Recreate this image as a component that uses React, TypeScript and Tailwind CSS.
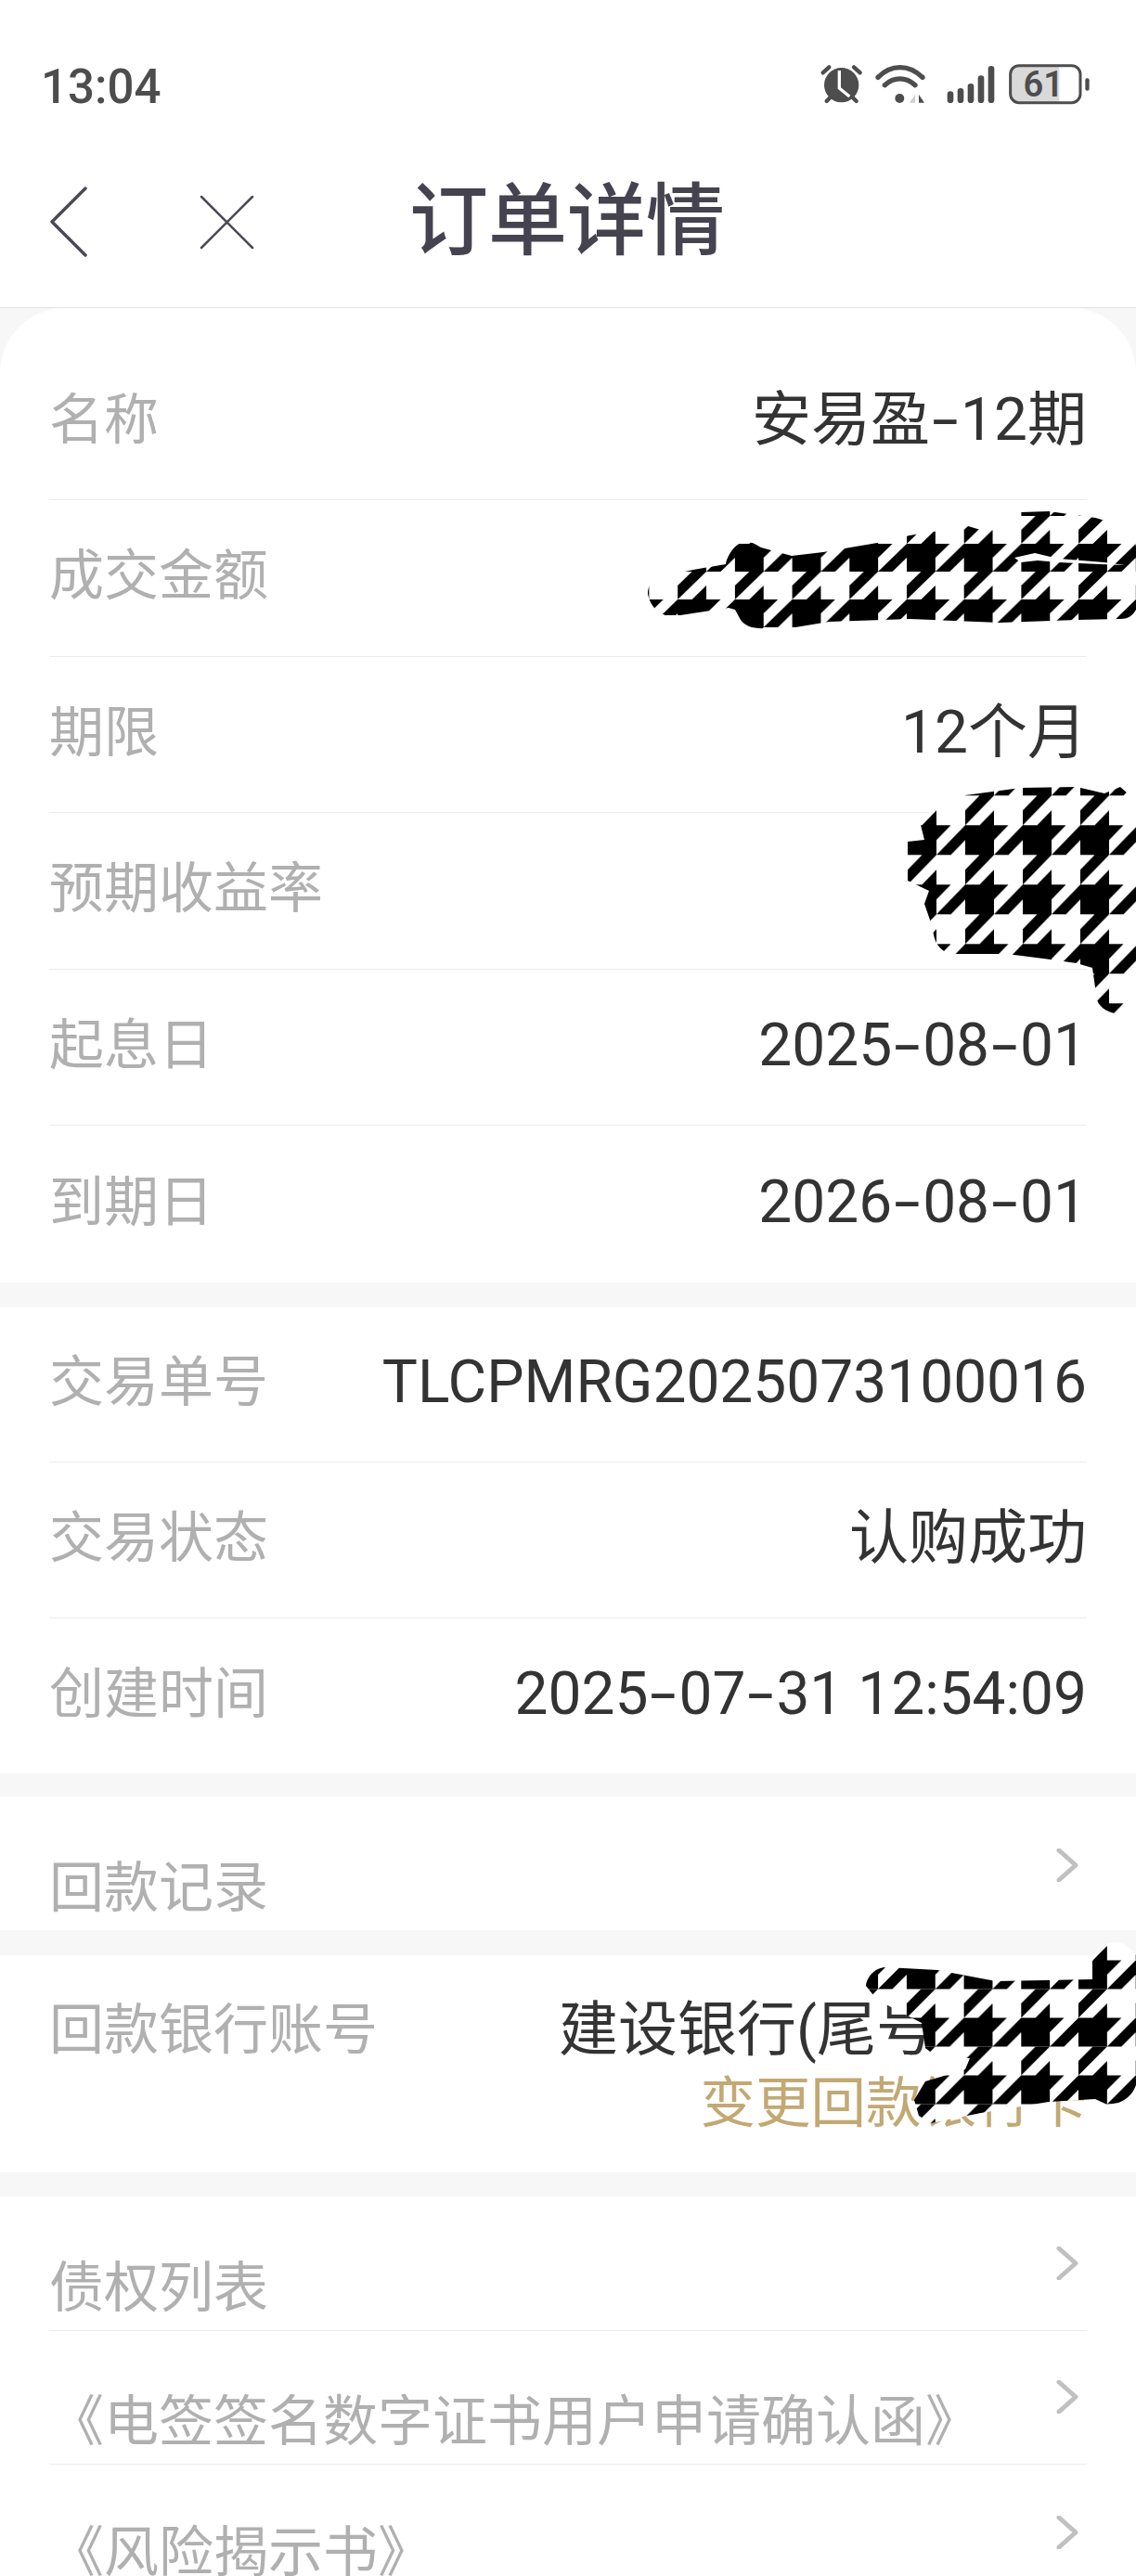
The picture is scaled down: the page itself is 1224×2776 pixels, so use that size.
const FONT = "font-['Roboto','Noto_Sans_CJK_SC',sans-serif]";

function Value({ text }: { text: string }) {
  const parts = text.split("-");
  return (
    <span className="whitespace-pre text-[64px] text-[#333333]">
      {parts.map((part, i) => (
        <span key={i}>
          {i > 0 ? <span className="inline-block w-[33px] scale-x-[1.6] text-center">-</span> : null}
          {part}
        </span>
      ))}
    </span>
  );
}

function Row({ label, value, last, height }: { label: string; value?: string; last?: boolean; height: string }) {
  return (
    <div className={`flex items-center justify-between pb-[3px] ${height} ${last ? "" : "border-b border-[#ececec]"}`}>
      <span className="text-[#b0b0b0]">{label}</span>
      {value ? <Value text={value} /> : null}
    </div>
  );
}

function Chevron({ className }: { className: string }) {
  return (
    <svg width="24" height="36" viewBox="0 0 24 36" fill="none" className={className}>
      <path d="M3 2L21 18L3 34" stroke="#c0c0c0" strokeWidth="5" strokeLinecap="round" strokeLinejoin="round" />
    </svg>
  );
}

function LinkRow({ label, line, height, textClass, chevClass }: { label: string; line?: boolean; height: string; textClass: string; chevClass: string }) {
  return (
    <div className={`flex items-start justify-between ${height} ${line ? "border-b border-[#ececec]" : ""}`}>
      <span className={`text-[#b0b0b0] ${textClass}`}>{label}</span>
      <Chevron className={chevClass} />
    </div>
  );
}

function Tile({ id, x, y, w, h }: { id: string; x: number; y: number; w: number; h: number }) {
  return (
    <pattern id={id} patternUnits="userSpaceOnUse" x={x} y={y} width={w} height={h}>
      <rect width={w} height={h} fill="#ffffff" />
      <g transform={`scale(${w / 4},${h / 4})`} fill="#000000">
        <polygon points="0,1 1,1 2,0 2,1 3,1 2,2 2,3 0,3" />
        <polygon points="1,3 2,3 1,4 0,4" />
        <polygon points="0,0 1,0 0,1" />
        <polygon points="4,1 2,3 3,3 4,2" />
      </g>
    </pattern>
  );
}

function Scribbles() {
  return (
    <svg width="1224" height="2776" viewBox="0 0 1224 2776" className="absolute left-0 top-0">
      <defs>
        <Tile id="p1" x={977} y={571} w={61.7} h={60} />
        <Tile id="p2" x={1040} y={873.3} w={62} h={64} />
        <Tile id="p3" x={1162} y={2097} w={61.7} h={62} />
      </defs>
      <path
        fill="url(#p1)"
        d="M698 640 C698 630 703 625 710 622 L747 614 L782 608 C783 600 792 584 803 584 C812 584 816 588 820 590 L853 599 L887 595 L910 591 L963 582 L980 577 L1043 567 L1060 572 L1100 552 L1130 551 L1180 558 C1205 565 1224 575 1224 590 L1224 657 C1220 664 1215 667 1207 667 L1160 668 L1077 671 L980 667 L893 670 L857 676 L827 677 C812 678 803 675 798 668 L792 657 L785 655 L773 657 L733 663 L717 663 C708 660 700 652 698 640 Z"
      />
      <polygon fill="#ffffff" points="1093,601 1115,596 1140,602 1190,606 1212,609 1185,608 1140,606 1118,604 1100,606" />
      <path
        fill="url(#p2)"
        d="M1040 857 L1100 849 L1160 848 L1190 855 L1207 848 L1215 855 L1224 863 L1224 1073 C1220 1085 1215 1092 1207 1092 C1198 1093 1186 1088 1182 1078 L1177 1043 L1160 1038 L1132 1034 L1085 1028 L1025 1028 C1015 1026 1006 1018 1005 1000 L996 974 L1001 960 L978 949 L978 907 L996 905 L992 889 L1005 870 Z"
      />
      <path
        fill="url(#p3)"
        d="M933 2140 C934 2130 943 2120 955 2120 L1010 2123 L1073 2135 L1177 2133 L1177 2113 L1193 2095 C1205 2090 1215 2095 1224 2107 L1224 2247 C1220 2258 1213 2263 1205 2266 L1193 2268 L1180 2262 L1130 2265 L1057 2277 L1003 2288 L990 2280 L985 2263 L997 2243 L1040 2230 L1045 2218 L1010 2217 L997 2207 L993 2180 L945 2155 Z"
      />
    </svg>
  );
}

function StatusIcons() {
  return (
    <svg width="360" height="100" viewBox="0 0 1080 300" className="mt-[-4px]" fill="none">
      <circle cx="200" cy="155" r="56" fill="#4d4d4d" />
      <path d="M193 108V165L226 192" stroke="#ffffff" strokeWidth="10" />
      <path d="M140 115L160 97M240 97L260 115M152 207L166 193M248 207L234 193" stroke="#4d4d4d" strokeWidth="13" strokeLinecap="round" />
      <path d="M318 130C360 87 418 87 462 130" stroke="#4d4d4d" strokeWidth="16" strokeLinecap="round" />
      <path d="M340 155C370 128 408 128 438 155" stroke="#4d4d4d" strokeWidth="16" strokeLinecap="round" />
      <circle cx="388" cy="198" r="15" fill="#4d4d4d" />
      <path d="M438 186V212H420Z" fill="#cfcfcf" />
      <path d="M450 186V212H468Z" fill="#4d4d4d" />
      <rect x="542" y="175" width="20" height="38" rx="10" fill="#4d4d4d" />
      <rect x="575" y="165" width="20" height="48" rx="10" fill="#4d4d4d" />
      <rect x="608" y="150" width="20" height="63" rx="10" fill="#4d4d4d" />
      <rect x="641" y="124" width="20" height="89" rx="10" fill="#4d4d4d" />
      <rect x="674" y="93" width="20" height="120" rx="10" fill="#4d4d4d" />
      <path d="M904 94H775C757 94 750 101 750 119V184C750 202 757 209 775 209H904Z" fill="#d9d9d9" />
      <rect x="746" y="92" width="226" height="120" rx="28" stroke="#4d4d4d" strokeWidth="9" />
      <rect x="988" y="133" width="13" height="40" rx="6" fill="#4d4d4d" />
      <text x="853" y="192" textAnchor="middle" fontSize="114" fontWeight="600" fill="#4d4d4d" fontFamily="Roboto, sans-serif">61</text>
    </svg>
  );
}

export default function App() {
  return (
    <div className={`relative h-[2776px] w-[1224px] overflow-hidden bg-[#f7f7f7] text-[59px] leading-[78px] ${FONT}`}>
      <header className="h-[332px] border-b border-[#e4e4e4] bg-white">
        <div className="flex h-[184px] items-center justify-between pl-[44px] pr-[24px]">
          <span className="pt-[2px] text-[51px] font-medium leading-none text-[#4d4d4d]">13:04</span>
          <StatusIcons />
        </div>
        <div className="flex h-[110px] items-center pl-[50px]">
          <svg width="50" height="80" viewBox="0 0 50 80" fill="none">
            <path d="M42 4L6 40L42 76" stroke="#4a4a55" strokeWidth="3.5" strokeLinecap="round" strokeLinejoin="round" />
          </svg>
          <svg width="65" height="65" viewBox="0 0 65 65" fill="none" className="ml-[112px]">
            <path d="M5 5L60 60M60 5L5 60" stroke="#4a4a55" strokeWidth="2.5" strokeLinecap="round" />
          </svg>
          <h1 className="ml-[164px] text-[85px] font-medium leading-none text-[#44434f]">订单详情</h1>
        </div>
      </header>

      <main className="flex flex-col gap-[27px]">
        <section className="rounded-t-[70px] bg-white px-[53px]">
          <div className="flex h-[207px] items-center justify-between border-b border-[#ececec] pt-[35px]">
            <span className="text-[#b0b0b0]">名称</span>
            <Value text="安易盈-12期" />
          </div>
          <Row height="h-[168.5px]" label="成交金额" />
          <Row height="h-[168.5px]" label="期限" value="12个月" />
          <Row height="h-[168.5px]" label="预期收益率" />
          <Row height="h-[168.5px]" label="起息日" value="2025-08-01" />
          <Row height="h-[168.5px]" label="到期日" value="2026-08-01" last />
        </section>

        <section className="bg-white px-[53px]">
          <Row height="h-[167.5px]" label="交易单号" value="TLCPMRG2025073100016" />
          <Row height="h-[167.5px]" label="交易状态" value="认购成功" />
          <Row height="h-[167.5px]" label="创建时间" value="2025-07-31 12:54:09" last />
        </section>

        <section className="-mt-[2px] bg-white px-[53px]">
          <LinkRow label="回款记录" height="h-[144px]" textClass="mt-[60px]" chevClass="mt-[56px] mr-[9px]" />
        </section>

        <section className="h-[234px] bg-white px-[53px] pt-[42px]">
          <div className="flex items-start justify-between">
            <span className="text-[#b0b0b0]">回款银行账号</span>
            <div className="flex flex-col items-end">
              <span className="pr-[163px] text-[64px] text-[#333333]">建设银行(尾号</span>
              <span className="mt-[1px] text-[59.5px] text-[#c2a873]">变更回款银行卡</span>
            </div>
          </div>
        </section>

        <section className="-mt-[1px] bg-white px-[53px]">
          <LinkRow label="债权列表" height="h-[145px]" textClass="mt-[60px]" chevClass="mt-[54px] mr-[9px]" line />
          <LinkRow label="《电签签名数字证书用户申请确认函》" height="h-[144px]" textClass="mt-[59px]" chevClass="mt-[53px] mr-[9px]" line />
          <LinkRow label="《风险揭示书》" height="h-[144px]" textClass="mt-[56px]" chevClass="mt-[55px] mr-[9px]" />
        </section>
      </main>

      <Scribbles />
    </div>
  );
}
